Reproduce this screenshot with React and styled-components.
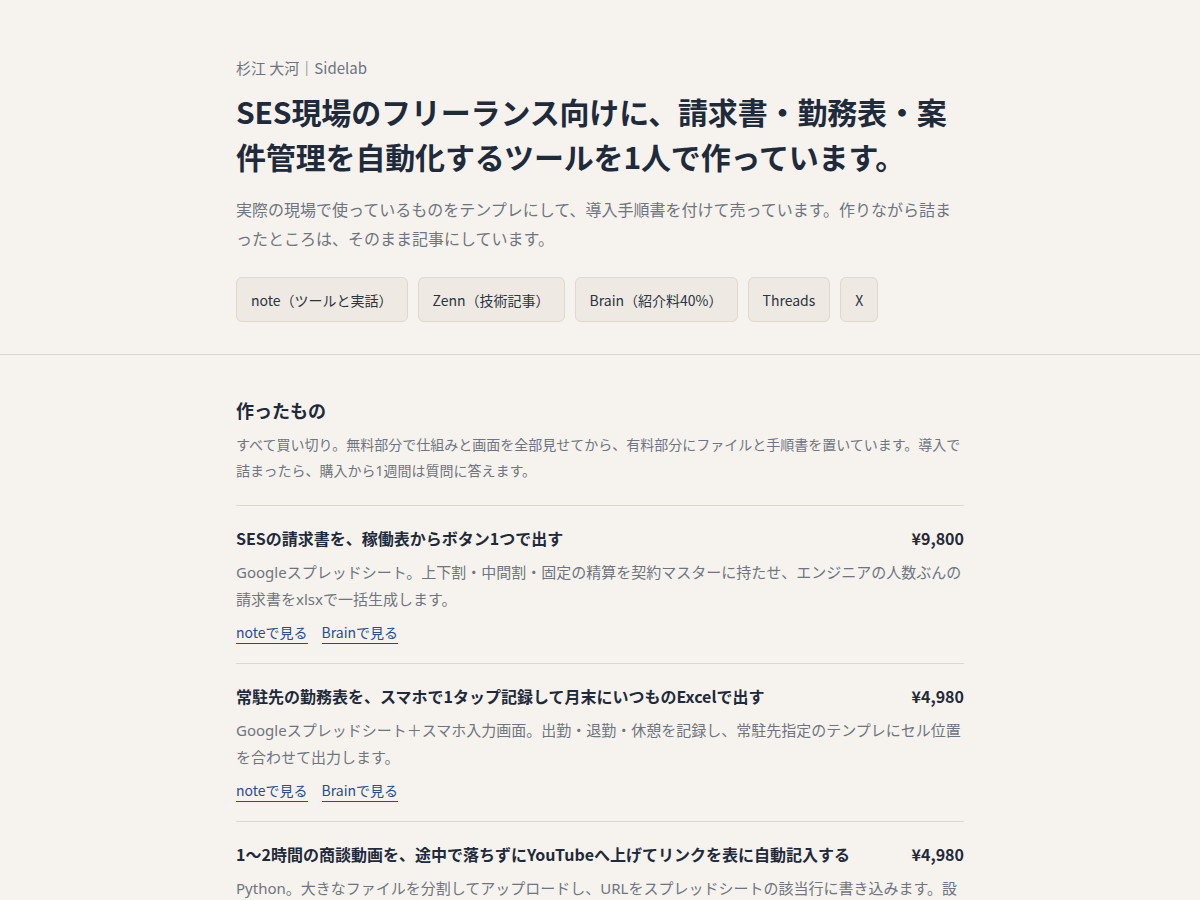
import React from "react";
import styled, { createGlobalStyle } from "styled-components";

const Global = createGlobalStyle`
  html, body { margin: 0; padding: 0; background: #f6f3ee; }
  body {
    font-family: "Noto Sans CJK JP", "Noto Sans", sans-serif;
    color: #1f2a3a;
    -webkit-font-smoothing: antialiased;
  }
  * { box-sizing: border-box; }
`;

const bodyFont = `"Noto Sans", "Noto Sans CJK JP", sans-serif`;

const Header = styled.header`
  border-bottom: 1px solid #dcd7cf;
  padding: 57px 0 32px;
`;

const Container = styled.div`
  width: 728px;
  margin: 0 auto;
`;

const Byline = styled.div`
  font-size: 15px;
  line-height: 22px;
  color: #6b7280;
`;

const Title = styled.h1`
  margin: 10px 0 0;
  font-size: 30px;
  line-height: 45px;
  font-weight: 700;
  letter-spacing: -0.005em;
  color: #1f2a3a;
`;

const Lead = styled.p`
  margin: 17px 0 0;
  font-family: ${bodyFont};
  font-size: 16px;
  line-height: 29px;
  color: #6f7580;
`;

const LinkRow = styled.nav`
  display: flex;
  flex-wrap: wrap;
  gap: 10px;
  margin-top: 23px;
`;

const Chip = styled.a`
  display: inline-flex;
  align-items: center;
  height: 45px;
  padding: 0 14px;
  font-size: 14px;
  color: #2a3442;
  background: #eeeae3;
  border: 1px solid #ddd8d0;
  border-radius: 6px;
  text-decoration: none;
`;

const Section = styled.section`
  padding: 42px 0 40px;
`;

const SectionTitle = styled.h2`
  margin: 0;
  font-size: 18px;
  line-height: 27px;
  font-weight: 700;
  color: #1f2a3a;
`;

const SectionLead = styled.p`
  margin: 8px 0 21px;
  font-family: ${bodyFont};
  font-size: 14px;
  line-height: 26px;
  color: #6f7580;
`;

const List = styled.ul`
  list-style: none;
  margin: 0;
  padding: 0;
`;

const Item = styled.li`
  border-top: 1px solid #dcd7cf;
  padding: 20px 0 19px;
`;

const ItemHead = styled.div`
  display: flex;
  justify-content: space-between;
  align-items: baseline;
  gap: 24px;
`;

const ItemTitle = styled.h3`
  margin: 0;
  font-size: 16px;
  line-height: 24px;
  font-weight: 700;
  color: #1f2a3a;
`;

const Price = styled.span`
  font-size: 16px;
  line-height: 24px;
  font-weight: 700;
  color: #1f2a3a;
  white-space: nowrap;
`;

const ItemText = styled.p`
  margin: 9px 0 0;
  font-family: ${bodyFont};
  font-size: 15px;
  line-height: 27px;
  color: #6f7580;
`;

const ItemLinks = styled.div`
  display: flex;
  gap: 14px;
  margin-top: 8px;
`;

const TextLink = styled.a`
  display: inline-block;
  font-size: 14px;
  line-height: 22px;
  color: #2b4c8c;
  text-decoration: none;
  border-bottom: 1px solid #2b4c8c;
`;

const chips = [
  "note（ツールと実話）",
  "Zenn（技術記事）",
  "Brain（紹介料40%）",
  "Threads",
  "X",
];

const products = [
  {
    title: "SESの請求書を、稼働表からボタン1つで出す",
    price: "¥9,800",
    text:
      "Googleスプレッドシート。上下割・中間割・固定の精算を契約マスターに持たせ、エンジニアの人数ぶんの請求書をxlsxで一括生成します。",
  },
  {
    title: "常駐先の勤務表を、スマホで1タップ記録して月末にいつものExcelで出す",
    price: "¥4,980",
    text:
      "Googleスプレッドシート＋スマホ入力画面。出勤・退勤・休憩を記録し、常駐先指定のテンプレにセル位置を合わせて出力します。",
  },
  {
    title: "1〜2時間の商談動画を、途中で落ちずにYouTubeへ上げてリンクを表に自動記入する",
    price: "¥4,980",
    text:
      "Python。大きなファイルを分割してアップロードし、URLをスプレッドシートの該当行に書き込みます。設定ファイルを書き換えるだけで動きます。",
  },
];

export default function App() {
  return (
    <>
      <Global />
      <Header>
        <Container>
          <Byline>杉江 大河｜Sidelab</Byline>
          <Title>
            SES現場のフリーランス向けに、請求書・勤務表・案件管理を自動化するツールを1人で作っています。
          </Title>
          <Lead>
            実際の現場で使っているものをテンプレにして、導入手順書を付けて売っています。作りながら詰まったところは、そのまま記事にしています。
          </Lead>
          <LinkRow>
            {chips.map((c) => (
              <Chip key={c} href="#">
                {c}
              </Chip>
            ))}
          </LinkRow>
        </Container>
      </Header>
      <Section>
        <Container>
          <SectionTitle>作ったもの</SectionTitle>
          <SectionLead>
            すべて買い切り。無料部分で仕組みと画面を全部見せてから、有料部分にファイルと手順書を置いています。導入で詰まったら、購入から1週間は質問に答えます。
          </SectionLead>
          <List>
            {products.map((p) => (
              <Item key={p.title}>
                <ItemHead>
                  <ItemTitle>{p.title}</ItemTitle>
                  <Price>{p.price}</Price>
                </ItemHead>
                <ItemText>{p.text}</ItemText>
                <ItemLinks>
                  <TextLink href="#">noteで見る</TextLink>
                  <TextLink href="#">Brainで見る</TextLink>
                </ItemLinks>
              </Item>
            ))}
          </List>
        </Container>
      </Section>
    </>
  );
}
